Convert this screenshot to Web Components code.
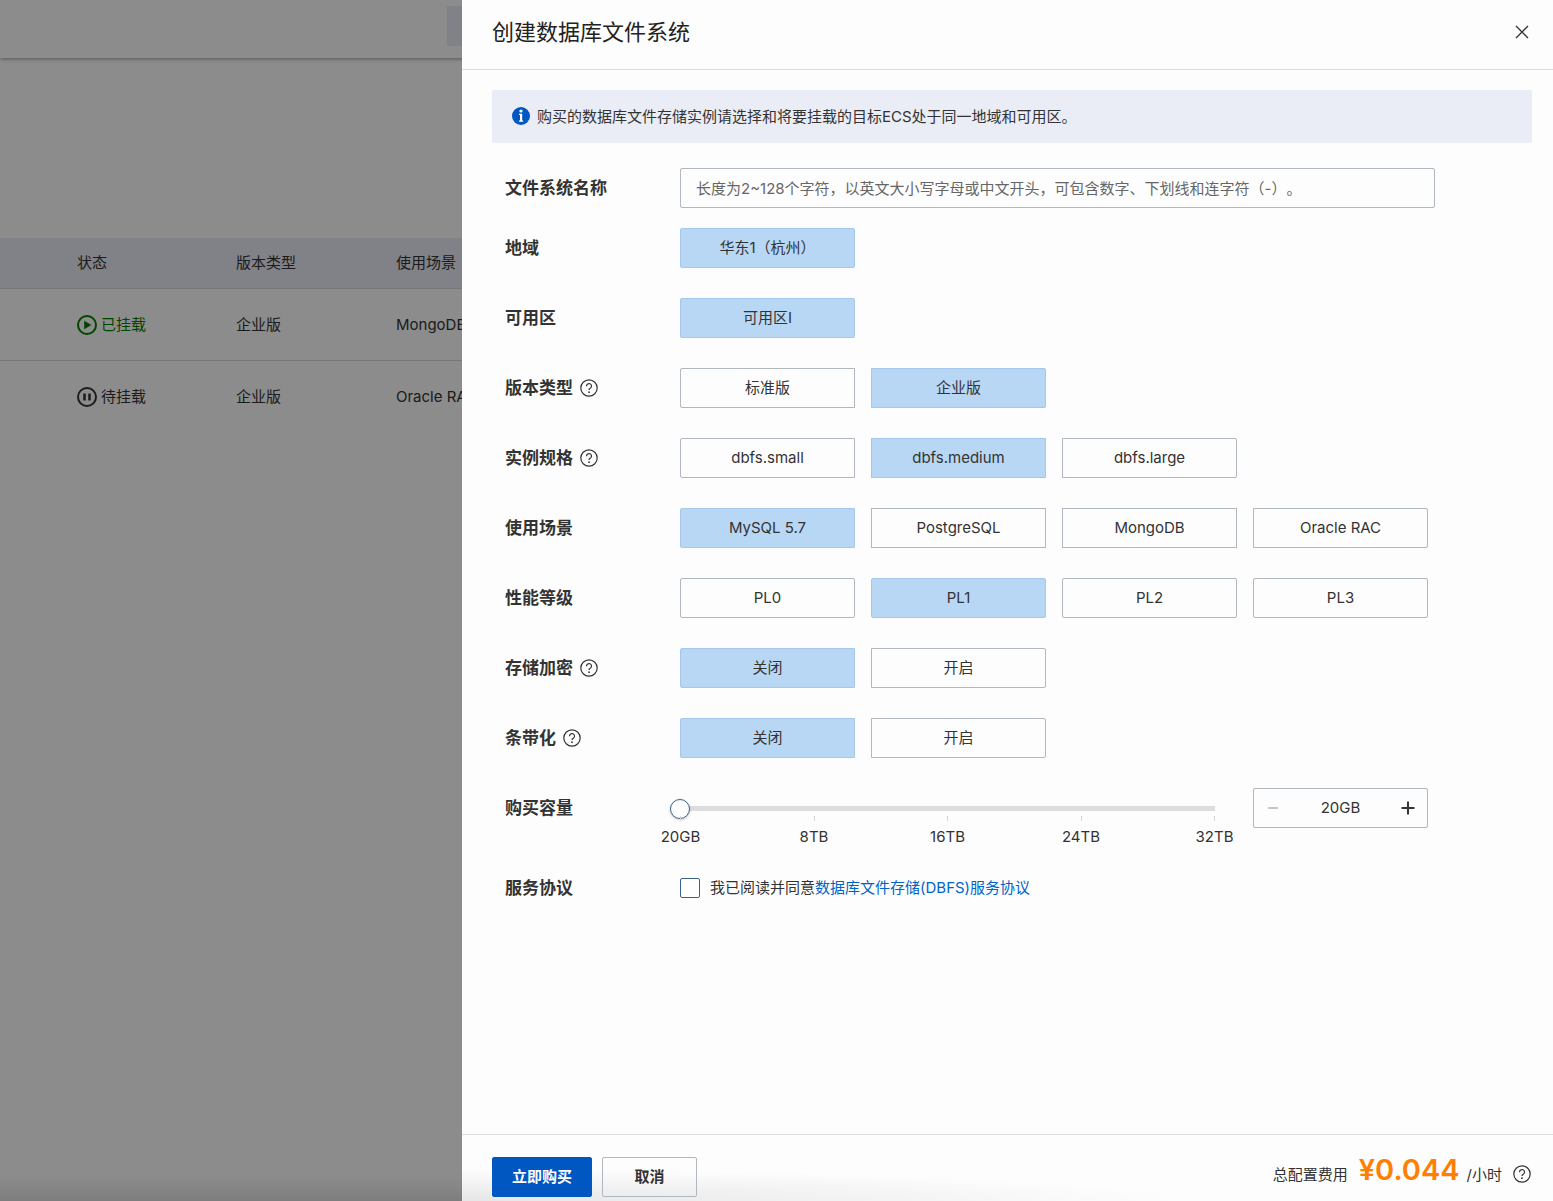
<!DOCTYPE html>
<html lang="zh-CN">
<head>
<meta charset="utf-8">
<meta name="viewport" content="width=device-width, initial-scale=1">
<title>创建数据库文件系统</title>
<style>
  html, body { height: 100%; }
  body {
    margin: 0;
    overflow: hidden;
    background: #fff;
    color: #333;
    font: 15px/20px Inter, "Noto Sans CJK SC", sans-serif;
    text-spacing-trim: space-all;
    --line: #dcdcdc;
    --border: #b0b7bf;
    --tint: #eaedf6;
    --primary: #0057c2;
    --selected: #b8d7f5;
  }
</style>
</head>
<body>
<dbfs-console></dbfs-console>
<dbfs-drawer heading="创建数据库文件系统">
  <dbfs-notice>购买的数据库文件存储实例请选择和将要挂载的目标ECS处于同一地域和可用区。</dbfs-notice>
  <dbfs-form></dbfs-form>
  <dbfs-footer slot="footer"></dbfs-footer>
</dbfs-drawer>

<script>
const define = (name, html, setup) => {
  customElements.define(name, class extends HTMLElement {
    connectedCallback() {
      if (this.shadowRoot) return;
      const root = this.attachShadow({ mode: 'open' });
      root.innerHTML = html;
      if (setup) setup(this, root);
    }
  });
};

define('dbfs-help', `
  <style>
    :host { display: inline-flex; flex: none; }
    button { display: flex; padding: 0; border: 0; background: none; color: #333; cursor: pointer; }
    svg { width: 18px; height: 18px; fill: none; stroke: currentColor; }
  </style>
  <button type="button" aria-label="帮助"><svg viewBox="0 0 18 18">
    <circle cx="9" cy="9" r="8.2" stroke-width="1.2"/>
    <path d="M6.500 7.300V7a2.500 2.500 0 1 1 4.200 1.900C9.800 9.600 9 9.900 9 11.100" stroke-width="1.200"/>
    <circle cx="9" cy="13.200" r=".9" fill="currentColor" stroke="none"/>
  </svg></button>`);

define('dbfs-console', `
  <style>
    :host { display: block; height: 100%; overflow: hidden; background: linear-gradient(transparent, rgba(0,0,0,.1)) bottom / 100% 24px no-repeat; }
    header { display: flex; align-items: center; height: 58px; box-sizing: border-box; padding: 0 447px 6px; box-shadow: 0 1px 4px rgba(0,0,0,.4); }
    .search { flex: none; width: 200px; height: 40px; background: var(--tint); }
    table { width: 955px; margin-top: 180px; border-collapse: collapse; table-layout: fixed; color: #333; }
    th, td { padding: 0; text-align: left; font-weight: 400; white-space: nowrap; border-bottom: 1px solid #d9d9d9; }
    th { height: 50px; background: var(--tint); }
    td { height: 71px; }
    tr:last-child td { border-bottom: 0; }
    col.lead { width: 77px; }
    .state { display: flex; align-items: center; gap: 4px; }
    .on { color: #008000; }
    svg { width: 20px; height: 20px; fill: none; stroke: currentColor; stroke-width: 2; }
  </style>
  <header><div class="search"></div></header>
  <table>
    <colgroup><col class="lead"><col style="width:159px"><col style="width:160px"><col></colgroup>
    <thead><tr><th></th><th>状态</th><th>版本类型</th><th>使用场景</th></tr></thead>
    <tbody>
      <tr><td></td><td><span class="state on"><svg viewBox="0 0 20 20"><circle cx="10" cy="10" r="9"/><path d="M7.200 5.800v8.400l7.300-4.200z" fill="currentColor" stroke="none"/></svg>已挂载</span></td><td>企业版</td><td>MongoDB</td></tr>
      <tr><td></td><td><span class="state"><svg viewBox="0 0 20 20"><circle cx="10" cy="10" r="9"/><path d="M7.500 6.500v7M12.500 6.500v7" stroke-width="2.500"/></svg>待挂载</span></td><td>企业版</td><td>Oracle RAC</td></tr>
    </tbody>
  </table>`);

define('dbfs-drawer', `
  <style>
    :host { position: fixed; inset: 0; display: flex; padding-left: 462px; background: rgba(0,0,0,.45); }
    section { flex: 1; min-width: 0; display: flex; flex-direction: column; background: #fdfdfd; }
    header { display: flex; align-items: center; justify-content: space-between; flex: none; height: 70px; box-sizing: border-box; padding: 0 21px 6px 30px; border-bottom: 1px solid var(--line); }
    h1 { margin: 0; font-size: 22px; line-height: 32px; font-weight: 400; color: #222; }
    button { display: flex; padding: 3px; border: 0; background: none; color: #333; cursor: pointer; }
    svg { width: 14px; height: 14px; fill: none; stroke: currentColor; stroke-width: 1.300; }
    main { flex: 1; min-height: 0; overflow: auto; padding: 20px 21px 20px 30px; }
  </style>
  <section role="dialog" aria-labelledby="t">
    <header><h1 id="t"></h1><button type="button" aria-label="关闭"><svg viewBox="0 0 14 14"><path d="M1 1l12 12M13 1L1 13"/></svg></button></header>
    <main><slot></slot></main>
    <slot name="footer"></slot>
  </section>`, (host, root) => { root.querySelector('h1').textContent = host.getAttribute('heading'); });

define('dbfs-notice', `
  <style>
    :host { display: flex; align-items: flex-start; gap: 7px; padding: 16px 20px; background: var(--tint); border-radius: 2px; line-height: 21px; margin-bottom: 25px; }
    svg { width: 18px; height: 20px; flex: none; }
  </style>
  <svg viewBox="0 0 18 20"><g transform="translate(0 1)"><circle cx="9" cy="9" r="9" fill="#0057c2"/><circle cx="9" cy="4" r="1.600" fill="#fff"/><path d="M7 6.800h3.200v6.800h1v1.200H7v-1.200h1V8H7z" fill="#fff"/></g></svg>
  <span><slot></slot></span>`);

define('dbfs-row', `
  <style>
    :host { display: grid; grid-template-columns: 175px minmax(0, 1fr); align-items: start; padding-left: 13px; }
    .label { display: flex; align-items: center; gap: 7px; height: 40px; font-size: 17px; font-weight: 700; color: #333; }
  </style>
  <div class="label"><slot name="label"></slot></div>
  <slot></slot>`, (host, root) => {
    if (host.hasAttribute('help')) root.querySelector('.label').append(document.createElement('dbfs-help'));
  });

define('dbfs-options', `
  <style>
    :host { display: block; }
    fieldset { display: flex; flex-wrap: wrap; gap: 16px; margin: 0; padding: 0; border: 0; min-width: 0; }
    label { position: relative; display: flex; align-items: center; justify-content: center; width: 175px; height: 40px; box-sizing: border-box; border: 1px solid var(--border); cursor: pointer; }
    label:first-child { border-radius: 2px 0 0 2px; }
    label:last-child { border-radius: 0 2px 2px 0; }
    label:only-child, :host([rounded]) label { border-radius: 2px; }
    label:has(:checked) { background: var(--selected); border-color: #a3c8ec; }
    input { position: absolute; inset: 0; margin: 0; appearance: none; cursor: pointer; }
  </style>
  <fieldset></fieldset>`, (host, root) => {
    const set = root.querySelector('fieldset');
    set.setAttribute('aria-label', host.getAttribute('name'));
    host.getAttribute('items').split('|').forEach(text => {
      const label = document.createElement('label');
      const input = document.createElement('input');
      input.type = 'radio';
      input.name = 'choice';
      input.value = text;
      input.checked = text === host.getAttribute('value');
      label.append(input, text);
      set.append(label);
    });
  });

define('dbfs-capacity', `
  <style>
    :host { display: flex; align-items: flex-start; gap: 38px; }
    .slider { width: 535px; padding-top: 10px; }
    input[type=range] { display: block; appearance: none; width: 555px; height: 20px; margin: 0 -10px; background: none; cursor: pointer; }
    input[type=range]::-webkit-slider-runnable-track { height: 5px; background: linear-gradient(#dcdddf, #dcdddf) 10px 0 / 535px 5px no-repeat; }
    input[type=range]::-webkit-slider-thumb { appearance: none; box-sizing: border-box; width: 20px; height: 20px; margin-top: -7px; border: 1px solid #3c6289; border-radius: 50%; background: #fff; box-shadow: 0 1px 3px rgba(0,0,0,.2); }
    .marks { display: flex; justify-content: space-between; margin: -2px 0 0; padding: 0; list-style: none; }
    li { display: flex; flex-direction: column; align-items: center; width: 1px; gap: 6px; white-space: nowrap; color: #333; }
    li::before { content: ""; width: 1px; height: 5px; background: #d3d5d8; }
    .step { display: flex; align-items: center; width: 175px; height: 40px; box-sizing: border-box; border: 1px solid var(--border); border-radius: 2px; }
    .step button { display: flex; align-items: center; justify-content: center; flex: none; width: 38px; height: 38px; padding: 0; border: 0; background: none; color: #333; cursor: pointer; }
    .step button:disabled { color: #b3b3b3; }
    .step input { flex: 1; min-width: 0; padding: 0; border: 0; background: none; text-align: center; font: inherit; color: #333; }
    svg { width: 14px; height: 14px; stroke: currentColor; stroke-width: 2; }
  </style>
  <div class="slider">
    <input type="range" aria-label="购买容量" min="20" max="32768" value="20">
    <ul class="marks"><li>20GB</li><li>8TB</li><li>16TB</li><li>24TB</li><li>32TB</li></ul>
  </div>
  <div class="step">
    <button type="button" aria-label="减少" disabled><svg viewBox="0 0 14 14"><path d="M2 7h10" stroke-width="1.500"/></svg></button>
    <input type="text" aria-label="容量" value="20GB">
    <button type="button" aria-label="增加"><svg viewBox="0 0 14 14"><path d="M.5 7h13M7 .5v13"/></svg></button>
  </div>`);

define('dbfs-name', `
  <style>
    :host { display: block; }
    input { display: block; width: 100%; max-width: 755px; height: 40px; box-sizing: border-box; padding: 0 15px; border: 1px solid var(--border); border-radius: 2px; background: none; font: inherit; text-spacing-trim: space-all; color: #333; }
    input::placeholder { color: #666; opacity: 1; }
  </style>
  <input type="text" aria-label="文件系统名称" placeholder="长度为2~128个字符，以英文大小写字母或中文开头，可包含数字、下划线和连字符（-）。">`);

define('dbfs-agreement', `
  <style>
    :host { display: flex; align-items: center; gap: 10px; height: 40px; }
    input { appearance: none; flex: none; width: 20px; height: 20px; margin: 0; border: 1px solid #3c6289; border-radius: 2px; background: #fff; cursor: pointer; }
    input:checked { background: var(--primary); }
    a { color: #0064c8; text-decoration: none; }
  </style>
  <input type="checkbox" id="agree">
  <span><label for="agree">我已阅读并同意</label><a href="#agreement">数据库文件存储(DBFS)服务协议</a></span>`);

define('dbfs-form', `
  <style>
    :host { display: block; }
    form { display: flex; flex-direction: column; gap: 30px; }
    .name { margin-bottom: -10px; }
    .last { margin-top: -9px; }
  </style>
  <form>
    <dbfs-row class="name"><span slot="label">文件系统名称</span><dbfs-name></dbfs-name></dbfs-row>
    <dbfs-row><span slot="label">地域</span><dbfs-options name="地域" items="华东1（杭州）" value="华东1（杭州）"></dbfs-options></dbfs-row>
    <dbfs-row><span slot="label">可用区</span><dbfs-options name="可用区" items="可用区I" value="可用区I"></dbfs-options></dbfs-row>
    <dbfs-row help><span slot="label">版本类型</span><dbfs-options name="版本类型" items="标准版|企业版" value="企业版"></dbfs-options></dbfs-row>
    <dbfs-row help><span slot="label">实例规格</span><dbfs-options name="实例规格" items="dbfs.small|dbfs.medium|dbfs.large" value="dbfs.medium"></dbfs-options></dbfs-row>
    <dbfs-row><span slot="label">使用场景</span><dbfs-options name="使用场景" items="MySQL 5.7|PostgreSQL|MongoDB|Oracle RAC" value="MySQL 5.7"></dbfs-options></dbfs-row>
    <dbfs-row><span slot="label">性能等级</span><dbfs-options rounded name="性能等级" items="PL0|PL1|PL2|PL3" value="PL1"></dbfs-options></dbfs-row>
    <dbfs-row help><span slot="label">存储加密</span><dbfs-options name="存储加密" items="关闭|开启" value="关闭"></dbfs-options></dbfs-row>
    <dbfs-row help><span slot="label">条带化</span><dbfs-options name="条带化" items="关闭|开启" value="关闭"></dbfs-options></dbfs-row>
    <dbfs-row><span slot="label">购买容量</span><dbfs-capacity></dbfs-capacity></dbfs-row>
    <dbfs-row class="last"><span slot="label">服务协议</span><dbfs-agreement></dbfs-agreement></dbfs-row>
  </form>`);

define('dbfs-footer', `
  <style>
    :host { display: flex; align-items: center; justify-content: space-between; flex: none; padding: 22px 22px 4px 30px; border-top: 1px solid var(--line); background: radial-gradient(ellipse 720px 32px at 0 100%, rgba(0,0,0,.09), transparent); }
    .actions { display: flex; gap: 10px; }
    button { height: 40px; box-sizing: border-box; padding: 0 19px; border: 1px solid var(--primary); border-radius: 2px; background: var(--primary); color: #fff; font: inherit; font-weight: 700; cursor: pointer; }
    .cancel { width: 95px; border-color: var(--border); background: none; color: #333; }
    .price { display: flex; align-items: baseline; padding-bottom: 12px; }
    strong { margin: 0 7px 0 11px; font-size: 29px; line-height: 24px; font-weight: 600; color: #ff8000; }
    dbfs-help { margin-left: 11px; padding-top: 6px; align-self: center; }
  </style>
  <div class="actions"><button type="button">立即购买</button><button type="button" class="cancel">取消</button></div>
  <div class="price"><span>总配置费用</span><strong>¥0.044</strong><span>/小时</span><dbfs-help></dbfs-help></div>`);
</script>
</body>
</html>
